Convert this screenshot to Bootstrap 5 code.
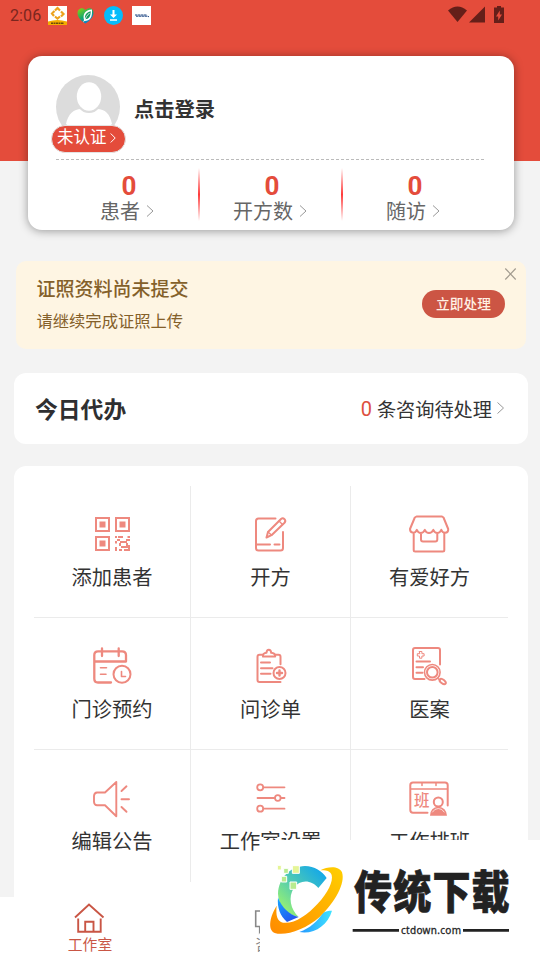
<!DOCTYPE html>
<html lang="zh-CN">
<head>
<meta charset="utf-8">
<meta name="viewport" content="width=device-width, initial-scale=1">
<title>工作室</title>
<link rel="stylesheet" href="https://cdn.jsdelivr.net/npm/bootstrap@5.3.0/dist/css/bootstrap.min.css">
<style>
body{width:540px;height:960px;overflow:hidden;background:#f3f3f3;font-family:Roboto,"Noto Sans CJK SC",sans-serif;color:#333}
svg{display:block;overflow:visible;flex:none}
.app{width:540px;height:960px}
.hero{height:161px;background:#e44c3b}
.status-bar{height:32px;padding:0 36px 0 10px;color:#7a261e;font-size:16px;letter-spacing:.1px}
.status-bar .app-icons{margin-left:7px;gap:9px;margin-top:-1px}
.profile{height:174px;margin:-105px 26px 0 28px;padding:0 28px;border-radius:14px;box-shadow:0 1px 10px rgba(0,0,0,.38)}
.profile-top{height:103px;padding-top:19px}
.avatar-box{width:64px;height:64px}
.verify{left:-5px;top:50px;width:75px;height:28px;border:1px solid #e3e3e3;border-radius:14px;background:#e44c3b;color:#fff;font-size:16.5px;line-height:22px;padding:0 5px 3px;white-space:nowrap;gap:3px}
.login{font-size:20.3px;line-height:28px;font-weight:700;margin:21px 0 0 14px}
.dash{height:1px;width:430px;background:repeating-linear-gradient(90deg,#bbb 0 3px,transparent 3px 5px)}
.stats{margin-right:-2px}
.stat b{display:block;font-size:26px;line-height:30px;color:#e44c3b;padding-left:3px}
.stat{padding-top:11px;width:143px}
.stat .lbl{font-size:20px;line-height:24px;color:#666;gap:6px;margin-top:-1px;padding-right:1px}
.stat .lbl svg{margin-top:-2px}
.sep{width:2px;height:53px;margin:8px -1px 0;background:linear-gradient(#fff,#ff3b3b 50%,#fff)}
.notice{margin:31px 14px 0 16px;height:88px;border-radius:10px;background:#fef5e3;padding:15px 21px 0 20.5px;color:#84602a}
.notice .t1{font-size:19px;line-height:28px;font-weight:500}
.notice .t2{font-size:16.3px;line-height:24px;margin-top:6px}
.go{width:83px;height:28px;border-radius:14px;background:#cc5544;color:#fff0e4;font-size:13.7px;font-weight:500;line-height:28px;margin-top:14px}
.close-x{right:10px;top:7px}
.today{margin:24px 12px 0 14px;height:71px;border-radius:12px;padding:0 24px 0 21px}
.today h2{font-size:22.8px;font-weight:700;color:#2f2f31;padding-top:5px}
.today .msg{font-size:19.2px;gap:5px}
.today .msg .num{color:#dd5040;font-size:20px;padding-top:2px}
.today .msg .txt{padding-top:5px}
.tools{margin:22px 12px 0 14px;height:431px;border-radius:12px 12px 0 0;padding:20px}
.tools-grid{display:grid;grid-template-columns:157px 160px 157px;grid-template-rows:repeat(3,132px)}
.tool{padding-top:28px;border-right:1px solid #ebebeb;border-bottom:1px solid #ebebeb}
.tool:nth-child(3n){border-right:0}
.tool:nth-child(n+7){border-bottom:0}
.tool .name{font-size:20.3px;line-height:24px;margin-top:12px;white-space:nowrap}
.ico{fill:none;stroke:#ee897f;stroke-width:2;stroke-linejoin:round;stroke-linecap:round}
.ico .solid{fill:#ee897f;stroke:none}
.tabs{height:63px}
.tab-item{width:180px;padding-top:3px;font-size:14.8px;line-height:20px;color:#888}
.tab-item.on{color:#c95645}
.brand{right:0;bottom:0;width:280px;height:120px}
</style>
<script src="https://cdn.jsdelivr.net/npm/bootstrap@5.3.0/dist/js/bootstrap.bundle.min.js"></script>
</head>
<body>
<div class="app position-relative overflow-hidden d-flex flex-column">
  <header class="hero flex-shrink-0">
    <div class="status-bar d-flex align-items-center justify-content-between">
      <div class="d-flex align-items-center"><span>2:06</span>
        <div class="app-icons d-flex align-items-center">
          <svg width="19" height="19" viewBox="0 0 19 19"><path fill="#fff" d="M0 0h19v19H0z"/><path fill="#f4ad00" d="M0 15.500Q9.500 12.500 19 15.500V19H0z"/><path d="M7 4.500 9.500 2l2.500 2.500M13 5.500 15.500 8 13 10.500M12 10.500 9.500 12.500 7 10.500M6 10 4 7.500 6.500 5" fill="none" stroke="#eca21d" stroke-width="2.200"/><path d="M3 17.300h13" stroke="#6d4b08" stroke-width="1.600" stroke-dasharray="2 .5"/></svg>
          <svg width="19" height="19" viewBox="0 0 19 19"><defs><linearGradient id="heart" x2=".7" y2="1"><stop offset="0" stop-color="#8fd60c"/><stop offset=".55" stop-color="#12a96b"/><stop offset="1" stop-color="#0877ee"/></linearGradient></defs><path fill="url(#heart)" d="M9.500 4C6 .5 1 3 1.600 8c.5 4 4.400 7.400 7.900 9.500 4-2.400 7.500-6 8-10C18 2.500 13 .8 9.500 4"/><path fill="#fff" d="M16 3.500C9 4 6.500 8 8 14l-1 2.500 1.500-1.500c5.500 0 8-3.500 7.500-11.500"/><path fill="#16995f" d="M14.700 5.200C10 6.500 8.500 9 9 13.200c4 0 5.700-3 5.700-8"/><path d="M8.500 14.500Q10 10 13.500 7" stroke="#fff" stroke-width=".8" fill="none"/></svg>
          <svg width="19" height="19" viewBox="0 0 19 19"><circle cx="9.500" cy="9.500" r="9.500" fill="#04bcfb"/><path fill="#fff" d="M8.500 4h2v4.500H13L9.500 12 6 8.500h2.500zM6 13.300h7v1.400H6z"/></svg>
          <svg width="19" height="19" viewBox="0 0 19 19"><path fill="#fff" d="M0 0h19v19H0z"/><path d="M3 9h12M4 10.200h12l1 .8" stroke="#1c4581" stroke-width="1" stroke-dasharray="2.500 .5" fill="none"/></svg>
        </div>
      </div>
      <svg width="56" height="18" viewBox="448 7 56 18" fill="#651f19"><path d="M448 10.500Q457.500 2.500 467 10.500L457.500 22z"/><path d="M469 22.500 485 6.500v16z"/><path fill-rule="evenodd" d="M497 6h4v1.500h3V23h-10V7.500h3zM499.800 10.500 496 16.500h2.200V20.500L502 14.500h-2.200z"/></svg>
    </div>
  </header>

  <section class="profile bg-white flex-shrink-0 position-relative">
    <div class="profile-top d-flex">
      <div class="avatar-box position-relative">
        <svg width="64" height="64" viewBox="0 0 64 64"><defs><clipPath id="av"><circle cx="32" cy="32" r="32"/></clipPath></defs><g clip-path="url(#av)"><path fill="#dcdcdc" d="M0 0h64v64H0z"/><path fill="#fff" d="M10 49C12 39 18 34 25 34q8 6 16 0c8 0 13 5 15 15l-4 3H14z"/><ellipse cx="33" cy="21.500" rx="14" ry="16.500" fill="#dcdcdc"/><ellipse cx="33" cy="21.500" rx="12.200" ry="14.300" fill="#fff"/></g></svg>
        <div class="verify position-absolute d-flex align-items-center"><span>未认证</span><svg width="6" height="10" viewBox="0 0 6 10"><path d="m.7.500 4.500 4.500-4.500 4.500" fill="none" stroke="#fff"/></svg></div>
      </div>
      <div class="login">点击登录</div>
    </div>
    <div class="dash"></div>
    <div class="stats d-flex text-center">
      <div class="stat flex-shrink-0"><b>0</b><div class="lbl d-flex justify-content-center align-items-center"><span>患者</span><svg width="8" height="12" viewBox="0 0 8 12"><path d="m1 .5 6 5.500-6 5.500" fill="none" stroke="#999"/></svg></div></div>
      <div class="sep flex-shrink-0"></div>
      <div class="stat flex-shrink-0"><b>0</b><div class="lbl d-flex justify-content-center align-items-center"><span>开方数</span><svg width="8" height="12" viewBox="0 0 8 12"><path d="m1 .5 6 5.500-6 5.500" fill="none" stroke="#999"/></svg></div></div>
      <div class="sep flex-shrink-0"></div>
      <div class="stat flex-shrink-0"><b>0</b><div class="lbl d-flex justify-content-center align-items-center"><span>随访</span><svg width="8" height="12" viewBox="0 0 8 12"><path d="m1 .5 6 5.500-6 5.500" fill="none" stroke="#999"/></svg></div></div>
    </div>
  </section>

  <section class="notice flex-shrink-0 position-relative d-flex justify-content-between">
    <div><div class="t1">证照资料尚未提交</div><div class="t2">请继续完成证照上传</div></div>
    <div class="go text-center">立即处理</div>
    <svg class="close-x position-absolute" width="11" height="12" viewBox="0 0 11 12"><path d="m.3.500 10.400 11M10.700.500.3 11.500" stroke="#a39c90" stroke-width="1.200"/></svg>
  </section>

  <section class="today bg-white flex-shrink-0 d-flex align-items-center justify-content-between">
    <h2 class="m-0">今日代办</h2>
    <div class="msg d-flex align-items-center"><span class="num">0</span><span class="txt">条咨询待处理</span><svg class="ms-n1" width="7" height="12" viewBox="0 0 7 12"><path d="m.5.500 6 5.500-6 5.500" fill="none" stroke="#999"/></svg></div>
  </section>

  <main class="tools bg-white flex-shrink-0">
    <div class="tools-grid">
      <div class="tool d-flex flex-column align-items-center">
        <svg class="ico" width="40" height="40" viewBox="92 514 40 40"><g stroke-linejoin="miter"><path d="M96 518h13v13H96zM116 518h13v13h-13zM96 537h13v13H96z"/></g><path class="solid" d="M99.500 521.500h6v6h-6zM119.500 521.500h6v6h-6zM99.500 540.500h6v6h-6zM115 536h2v2h-2zM118 536h5v2h-5zM127.500 536h2.500v2h-2.500zM117 539h3v2h6v-2h4v2h-3v2h-7v-2h-3zM115 541h2v2.500h-2zM119 543h2v3h5v-3h2v5h-7v-2h-2zM115 547h2v4h-2zM119 549h3v2h-3zM124 549h4v-4h2v6h-6z"/></svg>
        <div class="name">添加患者</div></div>
      <div class="tool d-flex flex-column align-items-center">
        <svg class="ico" width="40" height="40" viewBox="250.5 514 40 40"><path d="M275 518.500H258q-2.500 0-2.500 2.500v27q0 2.500 2.500 2.500h22q2.500 0 2.500-2.500v-16M256 544.500h13.500M274 544.500h5M266 537.500l1.500-5.500 13-13q1.800-1.500 3.500.2 1.600 1.800 0 3.500l-13 12.500z"/><path stroke-width="1.400" d="M278.500 521l3.500 3.500M267.500 532l3.500 3"/></svg>
        <div class="name">开方</div></div>
      <div class="tool d-flex flex-column align-items-center">
        <svg class="ico" width="40" height="40" viewBox="410 514 40 40"><path d="M416.500 516.500h25.500l1.500 1 4.700 11.500q.3 3.500-3.200 3.800-2.800 0-3.700-3-1.500 3.200-4 3.200t-4-3.200q-1.500 3.200-4.300 3.200t-4.200-3.200q-1.500 3.200-4 3.200t-4-3.200q-1 3-3.500 3-3.300-.3-3.300-3.800l4.800-11.500zM413.700 533v17q0 1.500 1.500 1.500h27.600q1.500 0 1.500-1.500v-17M421 533v6.500q0 2 2 2h12.300q2 0 2-2V533"/></svg>
        <div class="name">有爱好方</div></div>
      <div class="tool d-flex flex-column align-items-center">
        <svg class="ico" width="40" height="40" viewBox="92 646 40 40"><path stroke-width="2.300" d="M111 682.500H98q-3.700 0-3.700-3.700V655q0-3.700 3.700-3.700h24q4 0 4 3.700v6.500H95M102 648.500v7.500M118.700 648.500v7.500"/><path stroke-width="1.600" d="M100.500 667.700h6M100.500 674.300h5.500M121.500 671.500v5h4"/><circle cx="122" cy="674.300" r="8.500"/></svg>
        <div class="name">门诊预约</div></div>
      <div class="tool d-flex flex-column align-items-center">
        <svg class="ico" width="40" height="40" viewBox="250.5 646 40 40"><path d="M262 654.800h-3q-2 0-2 2V680q0 2 2 2h21M275 654.800h3q2 0 2 2v7.500M260.500 662.500h9M260.500 668.300h11.500M260.500 673.700h9.500M262.500 656.500q-.5-3.500 3.500-3.700.2-3 2.300-3t2.400 3q4 .2 4 3.700z"/><circle cx="279" cy="673" r="6"/><path stroke-width="2.400" d="M279 670.500v5M276.500 673h5"/></svg>
        <div class="name">问诊单</div></div>
      <div class="tool d-flex flex-column align-items-center">
        <svg class="ico" width="40" height="40" viewBox="410 646 40 40"><path d="M424.500 679H415q-2 0-2-2v-27q0-2 2-2h23q2 0 2 2v14.500M416.500 661.500H430M416.500 667.200h6.500M416.500 672.700h6"/><path stroke-width="1" d="M419.500 651.500h2.400v2.200h2.200v2.300h-2.200v2.200h-2.400V656h-2.200v-2.300h2.200z"/><circle cx="432.300" cy="672.300" r="7.800" stroke-width="1.600"/><circle cx="432.300" cy="672.300" r="5.300"/><path stroke-width="1.400" d="m438 678.500 2 1.700"/><ellipse cx="442.700" cy="681.500" rx="3.600" ry="1.900" transform="rotate(38 442.700 681.500)"/></svg>
        <div class="name">医案</div></div>
      <div class="tool d-flex flex-column align-items-center">
        <svg class="ico" width="40" height="40" viewBox="92 778 40 40"><path stroke-width="1.900" d="M116.300 782v34.300L105 805.300h-8q-2.700 0-3-3.300v-6q.3-3.300 3-3.500h8zM121.500 791l5-4.700M121.500 799.200h7.500M121.500 807l5 4.800"/></svg>
        <div class="name">编辑公告</div></div>
      <div class="tool d-flex flex-column align-items-center">
        <svg class="ico" width="40" height="40" viewBox="250.5 778 40 40"><g stroke-width="1.800"><path d="M263 787.300h21M257 798h17M280.500 798h3.500M263 808.700h21"/><circle cx="259.700" cy="787.300" r="3"/><circle cx="277.300" cy="798" r="2.800"/><circle cx="259.700" cy="808.700" r="3"/></g></svg>
        <div class="name">工作室设置</div></div>
      <div class="tool d-flex flex-column align-items-center">
        <svg class="ico" width="40" height="40" viewBox="410 778 40 40"><path d="M427.500 812.700H413q-2.700 0-2.700-2.700v-25q0-2.500 2.700-2.500h32q2.700 0 2.700 2.500v20.500"/><path stroke-width="1.500" d="M411 789h36M422 783v2.500M436 783v2.500"/><circle cx="438.300" cy="802" r="4.500"/><path class="solid" d="M430 815.800q.3-8.500 8.300-9 8 .5 8.700 9z"/><path stroke="#fff" stroke-width=".7" d="M432.500 812q2-3.500 5.800-3.500t5.900 3.500"/><text class="solid" x="414" y="805.800" font-size="15.500" font-weight="500">班</text></svg>
        <div class="name">工作排班</div></div>
    </div>
  </main>

  <nav class="tabs bg-white d-flex flex-shrink-0">
    <div class="tab-item on d-flex flex-column align-items-center">
      <svg width="36" height="35" viewBox="71.5 900 36 35" fill="none" stroke="#c95645" stroke-width="1.900"><path d="m74.500 917.500 14-13 14.500 13M77.700 918.500v13.300h22.500v-13.300M84.700 931.500v-9.700h8.300v9.700"/></svg>
      <span>工作室</span></div>
    <div class="tab-item d-flex flex-column align-items-center">
      <svg width="36" height="35" viewBox="252 900 36 35" fill="none" stroke="#888" stroke-width="1.600"><path d="M255.700 911h29v15.500h-22l-3 5v-5h-4z"/></svg>
      <span>咨询</span></div>
  </nav>

  <div class="brand bg-white position-absolute">
    <svg width="280" height="120" viewBox="15 15 840 360">
      <defs>
        <linearGradient id="gc" x1="0" y1="1" x2="1" y2="0"><stop offset=".15" stop-color="#92ee77"/><stop offset=".5" stop-color="#4dc9b5"/><stop offset="1" stop-color="#06a0f5"/></linearGradient>
        <linearGradient id="go" x1="0" y1="1" x2="1" y2="0"><stop offset="0" stop-color="#ff8a00"/><stop offset="1" stop-color="#ffcf00"/></linearGradient>
        <linearGradient id="gb" x2=".6" y2="1"><stop offset="0" stop-color="#16a9ff"/><stop offset="1" stop-color="#2456ef"/></linearGradient>
        <linearGradient id="gl" x1="0" x2="1"><stop offset="0" stop-color="#2496ff"/><stop offset="1" stop-color="#3fe3ff"/></linearGradient>
      </defs>
      <path fill="url(#gc)" d="M215 129 190 159C170 134 135 132 117 158 98 186 107 223 131 246 93 238 70 210 69 176 71 128 106 94 150 93 178 93 202 108 215 129"/>
      <path fill="url(#gb)" d="M69 188C82 219 102 238 131 246L96 261C75 242 66 217 69 188"/>
      <path fill="url(#gl)" d="M231 227C218 272 176 299 133 291 165 280 189 258 203 234 212 228 220 227 231 227"/>
      <path fill="url(#go)" d="M196 106C218 94 252 91 261 112 272 145 240 202 194 246 151 284 91 304 59 294 36 283 46 242 65 212 62 241 66 258 84 263 116 268 157 240 188 206 219 174 235 139 230 120 226 108 213 105 196 106"/>
      <g stroke="#fff" stroke-width="3"><path fill="#e5f596" d="M67 91h12v14H67zM112 92h21v23h-21z"/><path fill="#b8eb8f" d="M86 100h14v15H86zM79 124h16v17H79zM105 141h20v22h-20z"/></g>
      <text transform="translate(297 222) scale(.84 1)" font-family="'Noto Sans CJK SC',sans-serif" font-size="136" font-weight="900" fill="#222" stroke="#222" stroke-width="2" textLength="556" lengthAdjust="spacing">传统下载</text>
      <path fill="#222" d="M293 282h139v8H293zM624 282h138v8H624z"/>
      <text x="438" y="296" font-family="'Noto Sans',sans-serif" font-size="30" fill="#222" stroke="#222" stroke-width=".8" textLength="180">ctdown.com</text>
    </svg>
  </div>
</div>
</body>
</html>
